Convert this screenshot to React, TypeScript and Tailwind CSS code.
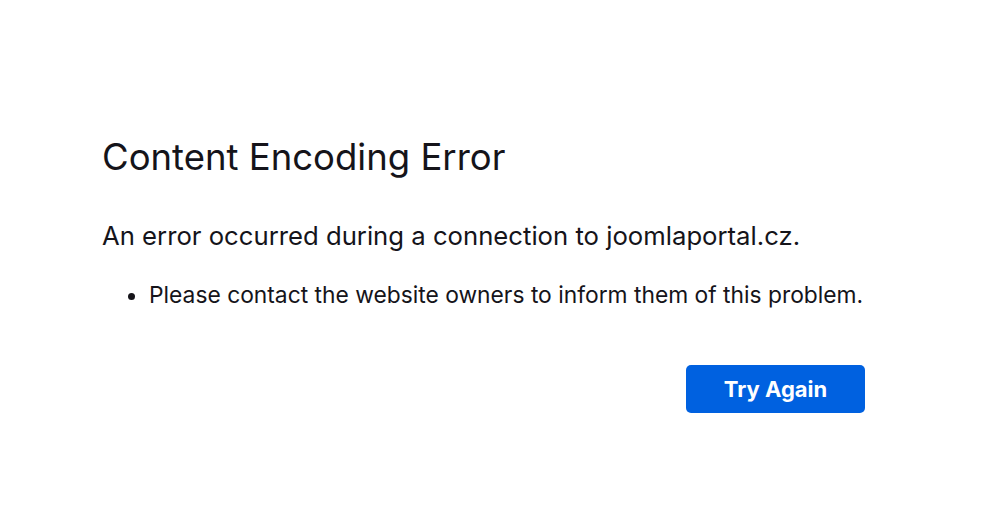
export default function App() {
  return (
    <div className="h-[512px] w-[1000px] bg-white font-['Inter','Noto_Sans',sans-serif] text-[#15141a]">
      <div className="ml-[102px] w-[763px] pt-[135px]">
        <h1 className="text-[36.5px] leading-[44px] font-normal">Content Encoding Error</h1>
        <p className="mt-[41px] text-[25.7px] leading-[32px]">An error occurred during a connection to joomlaportal.cz.</p>
        <ul className="mt-[28px] ml-[47px] list-disc text-[22.8px] leading-[30px]">
          <li>Please contact the website owners to inform them of this problem.</li>
        </ul>
        <div className="mt-[55px] flex justify-end">
          <button className="h-[48px] w-[179px] rounded-[5px] bg-[#0061e0] pt-[1px] text-[22px] font-bold text-white">
            Try Again
          </button>
        </div>
      </div>
    </div>
  );
}
